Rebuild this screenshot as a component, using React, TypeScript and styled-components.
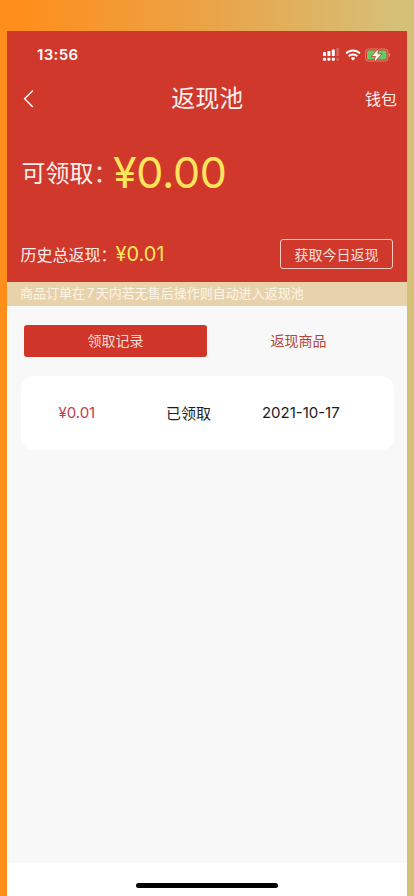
import React from 'react';
import styled, { createGlobalStyle } from 'styled-components';

const GlobalStyle = createGlobalStyle`
  * { box-sizing: border-box; }
  body {
    margin: 0;
    font-family: Inter, "Noto Sans CJK SC", sans-serif;
  }
  button { font: inherit; padding: 0; cursor: pointer; }
`;

const Backdrop = styled.div`
  width: 414px;
  height: 896px;
  padding: 30.5px 7px 0 7.4px;
  overflow: hidden;
  background: linear-gradient(90deg, #ff8e1b 0%, #ff8e1b 4%, #eaa347 50%, #d5c078 96%);
`;

const Screen = styled.main`
  height: 866px;
  display: flex;
  flex-direction: column;
  background: #f8f8f8;
`;

const Hero = styled.header`
  height: 251px;
  flex: none;
  background: #cf382a;
  color: #fbeeec;
`;

const StatusBar = styled.div`
  height: 44px;
  padding: 4px 16px 0 29.5px;
  display: flex;
  align-items: center;
  justify-content: space-between;
  color: #fff;
`;

const Clock = styled.span`
  font-size: 15px;
  font-weight: 560;
  letter-spacing: 0.4px;
`;

const StatusIcons = styled.div`
  display: flex;
  align-items: center;
  svg { display: block; }
`;

const NavBar = styled.nav`
  height: 48px;
  padding: 0 10px 0 16px;
  display: grid;
  grid-template-columns: 60px 1fr 60px;
  align-items: center;
`;

const BackButton = styled.button`
  width: 14px;
  height: 20px;
  border: 0;
  background: none;
  color: #fff;
  svg { display: block; }
`;

const Title = styled.h1`
  margin: 1px 0 0;
  padding-right: 6px;
  font-size: 24px;
  font-weight: 400;
  line-height: 36px;
  text-align: center;
`;

const WalletLink = styled.span`
  font-size: 16px;
  font-weight: 400;
  line-height: 24px;
  margin-top: 1.5px;
  text-align: right;
`;

const Balance = styled.section`
  height: 100px;
  padding: 0 14px;
  display: flex;
  align-items: center;
`;

const Label = styled.span<{ $size: number; $width: number; $lift?: number }>`
  width: ${p => p.$width}px;
  margin-bottom: ${p => p.$lift ?? 0}px;
  font-size: ${p => p.$size}px;
  font-weight: 400;
  white-space: nowrap;
`;

const Amount = styled.span<{ $size: number; $weight?: number; $spacing?: number }>`
  font-size: ${p => p.$size}px;
  font-weight: ${p => p.$weight ?? 400};
  line-height: 1.2;
  letter-spacing: ${p => p.$spacing ?? 0}px;
  color: #ffe55c;
`;

const HistoryRow = styled.section`
  height: 30px;
  margin-top: 16.5px;
  padding: 0 14px 0 13px;
  display: flex;
  align-items: center;
`;

const ClaimButton = styled.button`
  width: 113px;
  height: 30px;
  margin-left: auto;
  border: 1px solid #efcac4;
  border-radius: 3px;
  background: none;
  color: #f8e0dc;
  font-size: 14px;
  font-weight: 400;
  line-height: 27px;
`;

const Notice = styled.p`
  flex: none;
  height: 24px;
  margin: 0;
  padding-left: 12.5px;
  background: #e7d2ac;
  color: #fcf6e8;
  font-size: 13px;
  line-height: 23px;
  white-space: nowrap;
`;

const Digit = styled.span`
  margin: 0 1.8px;
`;

const Tabs = styled.div`
  display: flex;
  margin: 19px 17px 0 16.5px;
`;

const Tab = styled.button<{ $active?: boolean }>`
  width: 183px;
  height: 32px;
  border: 0;
  border-radius: 3px;
  background: ${p => (p.$active ? '#cf3629' : 'transparent')};
  color: ${p => (p.$active ? '#f8dcd6' : '#b5433a')};
  font-size: 14px;
  line-height: 32px;
`;

const RecordCard = styled.article`
  height: 74px;
  margin: 19.5px 13px 0 13.5px;
  padding: 0 0 2px 37.5px;
  display: grid;
  grid-template-columns: 107.5px 96px 1fr;
  align-items: center;
  border-radius: 13px;
  background: #fff;
  color: #1c1c1c;
  font-size: 15px;
`;

const RecordAmount = styled.span`
  color: #c9404a;
`;

const HomeArea = styled.footer`
  height: 33.5px;
  margin-top: auto;
  flex: none;
  display: flex;
  justify-content: center;
  padding-top: 20px;
  background: #fff;
`;

const HomeIndicator = styled.div`
  width: 142px;
  height: 5px;
  border-radius: 3px;
  background: #000;
`;

const SignalIcon = () => (
  <svg width="17" height="13" viewBox="0 0 17 13" fill="#fff">
    <rect x="0" y="4" width="3" height="4" rx=".4" />
    <rect x="4.4" y="3" width="3" height="5" rx=".4" />
    <rect x="8.8" y="1.5" width="3" height="6.5" rx=".4" />
    <rect x="0" y="9.7" width="3" height="3" rx=".8" />
    <rect x="4.4" y="9.7" width="3" height="3" rx=".8" />
    <rect x="8.8" y="9.7" width="3" height="3" rx=".8" />
    <g opacity=".2">
      <rect x="13.2" y="0" width="3" height="8" rx=".4" />
      <rect x="13.2" y="9.7" width="3" height="3" rx=".8" />
    </g>
  </svg>
);

const WifiIcon = () => (
  <svg width="16" height="12" viewBox="0 0 16 12" fill="none" stroke="#fff" strokeWidth="2">
    <path d="M1.1 4.4a9.8 9.8 0 0 1 13.8 0" />
    <path d="M3.7 7.2a6.1 6.1 0 0 1 8.6 0" />
    <path d="M5.8 9.2a3.1 3.1 0 0 1 4.4 0L8 11.5z" fill="#fff" stroke="none" />
  </svg>
);

const BatteryIcon = () => (
  <svg width="26" height="14" viewBox="0 0 26 14">
    <rect x=".5" y="1" width="22.5" height="12" rx="3.2" fill="none" stroke="#dd8276" />
    <rect x="2" y="2.5" width="19.5" height="9" rx="1.6" fill="#66c965" />
    <path d="M24.2 5v4c1.4-.5 1.4-3.5 0-4z" fill="#e59b90" />
    <path d="M13.4.9 7.2 8h3.7l-1.3 5.5 6.6-7.3h-3.9z" fill="#fff" stroke="#cf382a" strokeWidth="1.4" paintOrder="stroke" />
  </svg>
);

const IconGap = styled.i<{ $w: number }>`
  width: ${p => p.$w}px;
`;

export default function App() {
  return (
    <>
      <GlobalStyle />
      <Backdrop>
        <Screen>
          <Hero>
            <StatusBar>
              <Clock>13:56</Clock>
              <StatusIcons>
                <SignalIcon />
                <IconGap $w={5} />
                <WifiIcon />
                <IconGap $w={4} />
                <BatteryIcon />
              </StatusIcons>
            </StatusBar>
            <NavBar>
              <BackButton aria-label="返回">
                <svg width="12" height="20" viewBox="0 0 12 20" fill="none" stroke="currentColor" strokeWidth="1.4">
                  <path d="M9.9 1.4 1.6 9.7 9.9 18" />
                </svg>
              </BackButton>
              <Title>返现池</Title>
              <WalletLink>钱包</WalletLink>
            </NavBar>
            <Balance>
              <Label $size={24} $width={91.5} $lift={3}>可领取：</Label>
              <Amount $size={43} $weight={370} $spacing={-0.3}>¥0.00</Amount>
            </Balance>
            <HistoryRow>
              <Label $size={16} $width={95}>历史总返现：</Label>
              <Amount $size={20}>¥0.01</Amount>
              <ClaimButton>获取今日返现</ClaimButton>
            </HistoryRow>
          </Hero>
          <Notice>
            商品订单在<Digit>7</Digit>天内若无售后操作则自动进入返现池
          </Notice>
          <Tabs>
            <Tab $active>领取记录</Tab>
            <Tab>返现商品</Tab>
          </Tabs>
          <RecordCard>
            <RecordAmount>¥0.01</RecordAmount>
            <span>已领取</span>
            <span>2021-10-17</span>
          </RecordCard>
          <HomeArea>
            <HomeIndicator />
          </HomeArea>
        </Screen>
      </Backdrop>
    </>
  );
}
